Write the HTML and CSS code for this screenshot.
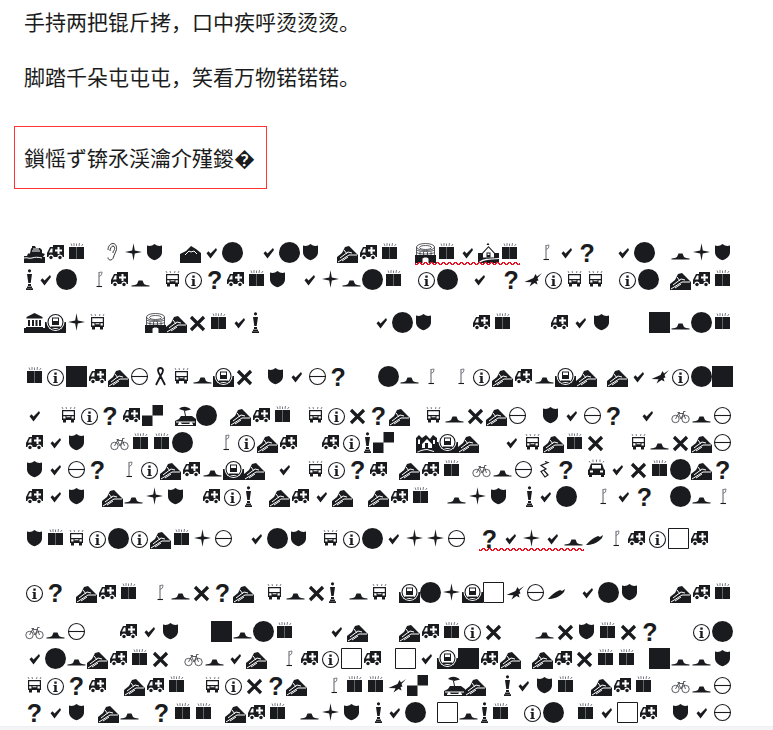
FILE: index.html
```html
<!DOCTYPE html>
<html lang="zh">
<head>
<meta charset="utf-8">
<title>锟斤拷</title>
<link rel="stylesheet" href="styles.css">
</head>
<body>
<svg class="defs" width="0" height="0">
<symbol id="a" viewBox="0 0 21 21"><path fill-rule="evenodd" d="M8 3h11v12h-1.400a2.600 2.600 0 0 0-5.200 0H8.600a2.600 2.600 0 0 0-5.200 0H2v-4l3-6h3zM4 10.500h3.500v-4H6zM12.500 5v2.500H10v2h2.500V12h2V9.500H17v-2h-2.500V5z"/><circle cx="6" cy="15.500" r="1.700"/><circle cx="15" cy="15.500" r="1.700"/></symbol>
<symbol id="g" viewBox="0 0 21 21"><path d="M3 5h15v12H3z"/><path class="lt" d="M6 4L5 1.500M8 4V1M10.500 4V1.500M13 4l.5-3M15.500 4L17 2"/><path class="stripe" d="M10.500 5v12"/></symbol>
<symbol id="h" viewBox="0 0 21 21"><path d="M3 3.500c2.700.8 5.200.4 7.500-1.500 2.300 1.900 4.800 2.300 7.500 1.500v7c0 3.700-3.300 6.300-7.500 7.800-4.200-1.500-7.500-4.100-7.500-7.800z"/></symbol>
<symbol id="e" viewBox="0 0 21 21"><path class="ln" d="M6 8c0-4 2.500-6.500 5-6.500s4 3 3.500 6c-.4 2.500-2 4-2.500 6-.4 2-1.500 4.500-3.500 4.500-1.500 0-2.500-1-2.500-2.500M8 9c0-2.500 1.500-5 3-5s2 2 1.500 3.500-1.500 1-1.500 3.500"/></symbol>
<symbol id="p" viewBox="0 0 21 21"><path d="M10.500 1.300l1.300 7.300L19 10l-7.200 1.400-1.300 7.300-1.300-7.300L2 10l7.200-1.400z"/></symbol>
<symbol id="m" viewBox="0 0 21 21"><path d="M0 21v-9l6-3 5-5 5 3 5 4v10z"/><path class="wl" d="M5 13l4-4 2 1 3-1 3 3"/></symbol>
<symbol id="c" viewBox="0 0 21 21"><path d="M5.500 11.300l2-2 2 2.200L15 6l1 2-6.500 8.500z"/></symbol>
<symbol id="o" viewBox="0 0 21 21"><circle cx="10.500" cy="10.500" r="10.500"/></symbol>
<symbol id="K" viewBox="0 0 21 21"><path d="M0 0h21v21H0z"/></symbol>
<symbol id="Y" viewBox="0 0 21 21"><path class="bx" d="M.5.5h20v20H.5z"/></symbol>
<symbol id="t" viewBox="0 0 21 21"><path d="M0 21v-6l5-4 3-6 4-1 4 4 5 5v8z"/><path class="wl" d="M1 20l11-7 8 0M3 16l8-6 4 1M7 8l3 4M5 19l6-4"/></symbol>
<symbol id="f" viewBox="0 0 21 21"><path d="M1.500 17.500h18v-1c-2.500-.2-4.500-.8-5.500-1.500l-1.500-3.500H8.500L7 15c-1 .7-3 1.300-5.500 1.500z"/></symbol>
<symbol id="i" viewBox="0 0 21 21"><circle class="ln1" cx="10.500" cy="11.500" r="8"/><path d="M9.300 6.500h2.400v2.300H9.300zM8.500 10h3.200v6h1v1H8.300v-1h1v-5h-.8z"/></symbol>
<symbol id="u" viewBox="0 0 21 21"><circle class="ln1" cx="10.500" cy="10.500" r="8"/><path class="ln1" d="M2.500 10.500h16"/></symbol>
<symbol id="r" viewBox="0 0 21 21"><path class="ln2" d="M6 19l4.500-9c1.500-2.500 2.500-4 2.500-5.500S12 2 10.500 2 8 3 8 4.500 9 7.500 10.500 10l4.500 9"/></symbol>
<symbol id="x" viewBox="0 0 21 21"><path class="ln3" d="M4 5l13 13M17 5L4 18"/></symbol>
<symbol id="b" viewBox="0 0 21 21"><path class="lt" d="M5 4L4 2M8.500 4l-.5-2M12.500 4l.5-2M16 4l1-2"/><path fill-rule="evenodd" d="M4 5h13v10h-1v2.500h-3V15H8v2.500H5V15H4zM5.200 6.200V10h10.600V6.200zM5.200 11.200v2.300h2.300v-2.300zM8.500 11.200v1h4v-1zM13.500 11.200v2.300h2.300v-2.300z"/></symbol>
<symbol id="n" viewBox="0 0 11 21"><circle cx="5.500" cy="1.800" r="1.600"/><path d="M3 5h5l-1.300 9H4.300zM4 15h3v2H4zM3 17.500h5V19H3zM2 19.300h7V21H2z"/></symbol>
<symbol id="l" viewBox="0 0 21 21"><path class="thin" d="M11 3v14"/><path class="lt" d="M11 3.500l3-.5-.5 3-2.500 1.500"/><path class="ln1" d="M8.500 17.500h5.500"/></symbol>
<symbol id="P" viewBox="0 0 21 21"><path d="M20 4l-5 3.500-1.500-2.500-2 4-9 4 7 .2-2 4.300 5-3.500 3 1.500-1-3.500 2-.5-1-2.500z"/></symbol>
<symbol id="S" viewBox="0 0 21 21"><path d="M0 21v-8h21v8z"/><ellipse class="thin" cx="10.500" cy="5" rx="9" ry="3.500"/><ellipse class="thin" cx="10.500" cy="5.500" rx="6" ry="2"/><path class="thin" d="M1.500 5v8M19.500 5v8M1.500 8c3 2 15 2 18 0M1.500 10.500c3 2 15 2 18 0M5 9.500V13M8.500 10v3M12.500 10v3M16 9.500V13"/><path class="wf" d="M7.500 21v-4c0-2 6-2 6 0v4z"/></symbol>
<symbol id="H" viewBox="0 0 21 21"><path d="M0 21V11h4l6.500-7 6.500 7h4v10z"/><path class="wf" d="M5 11.500l5.500-6 5.500 6v4H5zM1 20c3-3 8-3.500 13-3.500l7-.5v1l-7 .5c-4 0-8 1-11 2.500z"/><path d="M8.500 10.500h4v5h-4zM10 .8l1.500 2.200h-3z"/><path class="wf" d="M9.500 11.500h2V13h-2z"/></symbol>
<symbol id="W" viewBox="0 0 21 21"><path d="M0 21V6l3-3 3 3 4-3 4 4 3-4 4 3v15z"/><path class="wf" d="M2 12V8l1-1 1 1v4zM6 12l5-5 5 5v4H6zM17 8h2v4h-2zM1 20c3-2 7-3 10-3l7 2v1l-7-2c-3 0-7 1-9 2.500z"/><path d="M9 11h3v5H9z"/></symbol>
<symbol id="M" viewBox="0 0 21 21"><path d="M0 10h21v11H0z"/><circle class="wf" cx="10.500" cy="10" r="9"/><circle class="ln1" cx="10.500" cy="10" r="7.500"/><path fill-rule="evenodd" d="M7 5.500h7V13H7zM8 6.500V9h5V6.500zM6 14.500h9V16H6z"/></symbol>
<symbol id="T" viewBox="0 0 21 21"><path d="M0 21v-5h2v-1h17v1h2v5zM2.500 5L10.500 1l8 4v1.500h-16zM4 8h2v6H4zM8 8h2v6H8zM11.500 8h2v6h-2zM15 8h2v6h-2z"/></symbol>
<symbol id="B" viewBox="0 0 21 21"><circle class="thin" cx="5.500" cy="14" r="3.700"/><circle class="thin" cx="15.500" cy="14" r="3.700"/><path class="thin" d="M5.500 14l3-5.500h5L15.500 14M8.500 8.500l2.500 5.500 2.500-6M7.500 7.500h2.500M13.500 8V6.500h2"/></symbol>
<symbol id="U" viewBox="0 0 21 21"><path d="M4 4c3-3 8-3 12 .5L10 6zM10 6l1 5h-1l-1-5zM0 21v-5l4-2 2-3h11l4 3v7z"/><path class="wl" d="M1 17h19M3 19.500h15"/><circle class="wf" cx="5" cy="18.500" r="1.500"/><circle class="wf" cx="16" cy="18.500" r="1.500"/></symbol>
<symbol id="C" viewBox="0 0 21 21"><path d="M0 10.500h10.500V21H0zM10.500 0H21v10.500H10.500z"/></symbol>
<symbol id="Z" viewBox="0 0 21 21"><path d="M2 17c2-2 6-7 12-9l2 1 3-2-1 3-2 2c-3 3-9 5-14 5z"/></symbol>
<symbol id="Q" viewBox="0 0 21 21"><path class="lt" d="M4 3.500L3 2M7 3V.5M10.500 3V.5M14 3V.5M17 3.500L18 2"/><path fill-rule="evenodd" d="M5 4.500h11l2 5.500 1 1v5h-1v2h-3v-2H6v2H3v-2H2v-5l1-1zM6 6v3.500h9V6zM4 11.500v2h3v-2zm10 0v2h3v-2z"/></symbol>
<symbol id="y" viewBox="0 0 21 21"><path class="ln2t" d="M11 2.500l3 1-7 3 5 3.500-5 2.500 4 5.500 3-2-4-4.500"/></symbol>
<symbol id="s" viewBox="0 0 21 21"><path d="M0 21v-7h3l1-2.500h2l1-5 1-.5V4h3l1 2h4l2 2v3l3 1-2 3h2v6z"/><path class="wl" d="M0 16c3-1 5 1 8 0s6-1 10 0M9 7h6M8 9h8"/></symbol>
</svg>
<main class="page">
<p class="para first">手持两把锟斤拷，口中疾呼烫烫烫。</p>
<p class="para">脚踏千朵屯屯屯，笑看万物锘锘锘。</p>
<div class="box">鎻愮ず锛氶渓瀹介殣鍐�</div>
<section class="glyphs">
<div class="r"><svg class="g"><use href="#s"/></svg><svg class="g"><use href="#a"/></svg><svg class="g"><use href="#g"/></svg><i class="s"></i><svg class="g"><use href="#e"/></svg><svg class="g"><use href="#p"/></svg><svg class="g"><use href="#h"/></svg><i class="s"></i><svg class="g"><use href="#m"/></svg><svg class="g"><use href="#c"/></svg><svg class="g"><use href="#o"/></svg><i class="s"></i><svg class="g"><use href="#c"/></svg><svg class="g"><use href="#o"/></svg><svg class="g"><use href="#h"/></svg><i class="s"></i><svg class="g"><use href="#t"/></svg><svg class="g"><use href="#a"/></svg><svg class="g"><use href="#g"/></svg><i class="s"></i><span class="typo"><svg class="g"><use href="#S"/></svg><svg class="g"><use href="#g"/></svg><svg class="g"><use href="#c"/></svg><svg class="g"><use href="#H"/></svg><svg class="g"><use href="#g"/></svg></span><i class="s"></i><svg class="g"><use href="#l"/></svg><svg class="g"><use href="#c"/></svg><b class="q">?</b><i class="s"></i><svg class="g"><use href="#c"/></svg><svg class="g"><use href="#o"/></svg><i class="s"></i><svg class="g"><use href="#f"/></svg><svg class="g"><use href="#p"/></svg><svg class="g"><use href="#h"/></svg></div>
<div class="r"><svg class="g n"><use href="#n"/></svg><svg class="g"><use href="#c"/></svg><svg class="g"><use href="#o"/></svg><i class="s"></i><svg class="g"><use href="#l"/></svg><svg class="g"><use href="#a"/></svg><svg class="g"><use href="#f"/></svg><i class="s"></i><svg class="g"><use href="#b"/></svg><svg class="g"><use href="#i"/></svg><b class="q">?</b><svg class="g"><use href="#a"/></svg><svg class="g"><use href="#g"/></svg><svg class="g"><use href="#h"/></svg><i class="s"></i><svg class="g"><use href="#c"/></svg><svg class="g"><use href="#p"/></svg><svg class="g"><use href="#f"/></svg><svg class="g"><use href="#o"/></svg><svg class="g"><use href="#g"/></svg><i class="s"></i><svg class="g"><use href="#i"/></svg><svg class="g"><use href="#o"/></svg><i class="s"></i><svg class="g"><use href="#c"/></svg><i class="s"></i><b class="q">?</b><svg class="g"><use href="#P"/></svg><svg class="g"><use href="#i"/></svg><svg class="g"><use href="#b"/></svg><svg class="g"><use href="#b"/></svg><i class="s"></i><svg class="g"><use href="#i"/></svg><svg class="g"><use href="#o"/></svg><i class="s"></i><svg class="g"><use href="#t"/></svg><svg class="g"><use href="#a"/></svg><svg class="g"><use href="#g"/></svg></div>
<div class="r gap-43"><svg class="g"><use href="#T"/></svg><svg class="g"><use href="#M"/></svg><svg class="g"><use href="#p"/></svg><svg class="g"><use href="#b"/></svg><i class="s"></i><svg class="g"><use href="#S"/></svg><svg class="g"><use href="#t"/></svg><svg class="g"><use href="#x"/></svg><svg class="g"><use href="#g"/></svg><svg class="g"><use href="#c"/></svg><svg class="g n"><use href="#n"/></svg><i class="s"></i><i class="s"></i><i class="s"></i><svg class="g"><use href="#c"/></svg><svg class="g"><use href="#o"/></svg><svg class="g"><use href="#h"/></svg><i class="s"></i><svg class="g"><use href="#a"/></svg><svg class="g"><use href="#g"/></svg><i class="s"></i><svg class="g"><use href="#a"/></svg><svg class="g"><use href="#c"/></svg><svg class="g"><use href="#h"/></svg><i class="s"></i><svg class="g"><use href="#K"/></svg><svg class="g"><use href="#f"/></svg><svg class="g"><use href="#o"/></svg><svg class="g"><use href="#g"/></svg></div>
<div class="r gap-54"><svg class="g"><use href="#g"/></svg><svg class="g"><use href="#i"/></svg><svg class="g"><use href="#K"/></svg><svg class="g"><use href="#a"/></svg><svg class="g"><use href="#t"/></svg><svg class="g"><use href="#u"/></svg><svg class="g"><use href="#r"/></svg><svg class="g"><use href="#b"/></svg><svg class="g"><use href="#f"/></svg><svg class="g"><use href="#M"/></svg><svg class="g"><use href="#x"/></svg><i class="s"></i><svg class="g"><use href="#h"/></svg><svg class="g"><use href="#c"/></svg><svg class="g"><use href="#u"/></svg><b class="q">?</b><i class="s"></i><i class="s"></i><i class="s"></i><svg class="g"><use href="#o"/></svg><svg class="g"><use href="#f"/></svg><svg class="g"><use href="#l"/></svg><i class="s"></i><svg class="g"><use href="#l"/></svg><svg class="g"><use href="#i"/></svg><svg class="g"><use href="#t"/></svg><svg class="g"><use href="#a"/></svg><svg class="g"><use href="#f"/></svg><svg class="g"><use href="#M"/></svg><svg class="g"><use href="#t"/></svg><i class="s"></i><svg class="g"><use href="#t"/></svg><svg class="g"><use href="#c"/></svg><svg class="g"><use href="#P"/></svg><svg class="g"><use href="#i"/></svg><svg class="g"><use href="#o"/></svg><svg class="g"><use href="#K"/></svg></div>
<div class="r gap-39"><svg class="g"><use href="#c"/></svg><i class="s"></i><svg class="g"><use href="#b"/></svg><svg class="g"><use href="#i"/></svg><b class="q">?</b><svg class="g"><use href="#a"/></svg><svg class="g"><use href="#C"/></svg><i class="s"></i><svg class="g"><use href="#U"/></svg><svg class="g"><use href="#o"/></svg><i class="s"></i><svg class="g"><use href="#t"/></svg><svg class="g"><use href="#a"/></svg><svg class="g"><use href="#g"/></svg><i class="s"></i><svg class="g"><use href="#b"/></svg><svg class="g"><use href="#i"/></svg><svg class="g"><use href="#x"/></svg><b class="q">?</b><svg class="g"><use href="#t"/></svg><i class="s"></i><svg class="g"><use href="#b"/></svg><svg class="g"><use href="#f"/></svg><svg class="g"><use href="#x"/></svg><svg class="g"><use href="#t"/></svg><svg class="g"><use href="#u"/></svg><i class="s"></i><svg class="g"><use href="#h"/></svg><svg class="g"><use href="#c"/></svg><svg class="g"><use href="#u"/></svg><b class="q">?</b><i class="s"></i><svg class="g"><use href="#c"/></svg><i class="s"></i><svg class="g"><use href="#B"/></svg><svg class="g"><use href="#f"/></svg><svg class="g"><use href="#u"/></svg></div>
<div class="r"><svg class="g"><use href="#a"/></svg><svg class="g"><use href="#c"/></svg><svg class="g"><use href="#h"/></svg><i class="s"></i><svg class="g"><use href="#B"/></svg><svg class="g"><use href="#g"/></svg><svg class="g"><use href="#g"/></svg><svg class="g"><use href="#o"/></svg><i class="s"></i><svg class="g"><use href="#l"/></svg><svg class="g"><use href="#i"/></svg><svg class="g"><use href="#t"/></svg><svg class="g"><use href="#a"/></svg><i class="s"></i><svg class="g"><use href="#a"/></svg><svg class="g"><use href="#i"/></svg><svg class="g n"><use href="#n"/></svg><svg class="g"><use href="#C"/></svg><i class="s"></i><svg class="g"><use href="#W"/></svg><svg class="g"><use href="#M"/></svg><svg class="g"><use href="#t"/></svg><i class="s"></i><svg class="g"><use href="#c"/></svg><svg class="g"><use href="#b"/></svg><svg class="g"><use href="#t"/></svg><svg class="g"><use href="#g"/></svg><svg class="g"><use href="#x"/></svg><i class="s"></i><svg class="g"><use href="#b"/></svg><svg class="g"><use href="#f"/></svg><svg class="g"><use href="#x"/></svg><svg class="g"><use href="#t"/></svg><svg class="g"><use href="#u"/></svg></div>
<div class="r"><svg class="g"><use href="#h"/></svg><svg class="g"><use href="#c"/></svg><svg class="g"><use href="#u"/></svg><b class="q">?</b><i class="s"></i><svg class="g"><use href="#l"/></svg><svg class="g"><use href="#i"/></svg><svg class="g"><use href="#t"/></svg><svg class="g"><use href="#a"/></svg><svg class="g"><use href="#f"/></svg><svg class="g"><use href="#M"/></svg><svg class="g"><use href="#t"/></svg><i class="s"></i><svg class="g"><use href="#c"/></svg><i class="s"></i><svg class="g"><use href="#b"/></svg><svg class="g"><use href="#i"/></svg><b class="q">?</b><svg class="g"><use href="#a"/></svg><i class="s"></i><svg class="g"><use href="#t"/></svg><svg class="g"><use href="#a"/></svg><svg class="g"><use href="#g"/></svg><i class="s"></i><svg class="g"><use href="#B"/></svg><svg class="g"><use href="#f"/></svg><svg class="g"><use href="#u"/></svg><svg class="g"><use href="#y"/></svg><b class="q">?</b><i class="s"></i><svg class="g"><use href="#Q"/></svg><svg class="g"><use href="#c"/></svg><svg class="g"><use href="#x"/></svg><svg class="g"><use href="#g"/></svg><svg class="g"><use href="#o"/></svg><svg class="g"><use href="#t"/></svg><b class="q">?</b></div>
<div class="r"><svg class="g"><use href="#a"/></svg><svg class="g"><use href="#c"/></svg><svg class="g"><use href="#h"/></svg><i class="s"></i><svg class="g"><use href="#t"/></svg><svg class="g"><use href="#f"/></svg><svg class="g"><use href="#p"/></svg><svg class="g"><use href="#h"/></svg><i class="s"></i><svg class="g"><use href="#a"/></svg><svg class="g"><use href="#i"/></svg><svg class="g n"><use href="#n"/></svg><i class="s"></i><svg class="g"><use href="#t"/></svg><svg class="g"><use href="#a"/></svg><svg class="g"><use href="#c"/></svg><svg class="g"><use href="#t"/></svg><i class="s"></i><svg class="g"><use href="#t"/></svg><svg class="g"><use href="#a"/></svg><svg class="g"><use href="#g"/></svg><i class="s"></i><svg class="g"><use href="#f"/></svg><svg class="g"><use href="#p"/></svg><svg class="g"><use href="#h"/></svg><i class="s"></i><svg class="g n"><use href="#n"/></svg><svg class="g"><use href="#c"/></svg><svg class="g"><use href="#o"/></svg><i class="s"></i><svg class="g"><use href="#l"/></svg><svg class="g"><use href="#c"/></svg><b class="q">?</b><i class="s"></i><svg class="g"><use href="#o"/></svg><svg class="g"><use href="#f"/></svg><svg class="g"><use href="#l"/></svg></div>
<div class="r gap-42"><svg class="g"><use href="#h"/></svg><svg class="g"><use href="#g"/></svg><svg class="g"><use href="#b"/></svg><svg class="g"><use href="#i"/></svg><svg class="g"><use href="#o"/></svg><svg class="g"><use href="#i"/></svg><svg class="g"><use href="#t"/></svg><svg class="g"><use href="#g"/></svg><svg class="g"><use href="#p"/></svg><svg class="g"><use href="#u"/></svg><i class="s"></i><svg class="g"><use href="#c"/></svg><svg class="g"><use href="#o"/></svg><svg class="g"><use href="#h"/></svg><i class="s"></i><svg class="g"><use href="#b"/></svg><svg class="g"><use href="#i"/></svg><svg class="g"><use href="#o"/></svg><svg class="g"><use href="#c"/></svg><svg class="g"><use href="#p"/></svg><svg class="g"><use href="#p"/></svg><svg class="g"><use href="#u"/></svg><i class="s"></i><span class="typo"><b class="q">?</b><svg class="g"><use href="#c"/></svg><svg class="g"><use href="#p"/></svg><svg class="g"><use href="#c"/></svg><svg class="g"><use href="#f"/></svg></span><svg class="g"><use href="#Z"/></svg><svg class="g"><use href="#l"/></svg><svg class="g"><use href="#a"/></svg><svg class="g"><use href="#i"/></svg><svg class="g"><use href="#Y"/></svg><svg class="g"><use href="#a"/></svg><i class="s"></i><i class="s"></i></div>
<div class="r gap-54"><svg class="g"><use href="#i"/></svg><b class="q">?</b><i class="s"></i><svg class="g"><use href="#t"/></svg><svg class="g"><use href="#a"/></svg><svg class="g"><use href="#g"/></svg><i class="s"></i><svg class="g"><use href="#l"/></svg><svg class="g"><use href="#f"/></svg><svg class="g"><use href="#x"/></svg><b class="q">?</b><svg class="g"><use href="#t"/></svg><i class="s"></i><svg class="g"><use href="#b"/></svg><svg class="g"><use href="#f"/></svg><svg class="g"><use href="#x"/></svg><svg class="g n"><use href="#n"/></svg><i class="s"></i><svg class="g"><use href="#f"/></svg><svg class="g"><use href="#b"/></svg><i class="s"></i><svg class="g"><use href="#M"/></svg><svg class="g"><use href="#o"/></svg><svg class="g"><use href="#p"/></svg><svg class="g"><use href="#M"/></svg><svg class="g"><use href="#Y"/></svg><svg class="g"><use href="#P"/></svg><svg class="g"><use href="#u"/></svg><svg class="g"><use href="#Z"/></svg><i class="s"></i><svg class="g"><use href="#c"/></svg><svg class="g"><use href="#o"/></svg><svg class="g"><use href="#h"/></svg><i class="s"></i><i class="s"></i><i class="s"></i><svg class="g"><use href="#t"/></svg><svg class="g"><use href="#a"/></svg><svg class="g"><use href="#g"/></svg></div>
<div class="r gap-39"><svg class="g"><use href="#B"/></svg><svg class="g"><use href="#f"/></svg><svg class="g"><use href="#u"/></svg><i class="s"></i><i class="s"></i><i class="s"></i><svg class="g"><use href="#a"/></svg><svg class="g"><use href="#c"/></svg><svg class="g"><use href="#h"/></svg><i class="s"></i><i class="s"></i><i class="s"></i><svg class="g"><use href="#K"/></svg><svg class="g"><use href="#f"/></svg><svg class="g"><use href="#o"/></svg><svg class="g"><use href="#g"/></svg><i class="s"></i><i class="s"></i><i class="s"></i><svg class="g"><use href="#c"/></svg><svg class="g"><use href="#t"/></svg><i class="s"></i><i class="s"></i><i class="s"></i><svg class="g"><use href="#t"/></svg><svg class="g"><use href="#a"/></svg><svg class="g"><use href="#g"/></svg><svg class="g"><use href="#i"/></svg><svg class="g"><use href="#x"/></svg><i class="s"></i><i class="s"></i><i class="s"></i><svg class="g"><use href="#f"/></svg><svg class="g"><use href="#x"/></svg><svg class="g"><use href="#h"/></svg><svg class="g"><use href="#g"/></svg><svg class="g"><use href="#x"/></svg><b class="q">?</b><i class="s"></i><i class="s"></i><i class="s"></i><svg class="g"><use href="#i"/></svg><svg class="g"><use href="#o"/></svg></div>
<div class="r"><svg class="g"><use href="#c"/></svg><svg class="g"><use href="#o"/></svg><svg class="g"><use href="#f"/></svg><svg class="g"><use href="#t"/></svg><svg class="g"><use href="#a"/></svg><svg class="g"><use href="#g"/></svg><svg class="g"><use href="#x"/></svg><i class="s"></i><svg class="g"><use href="#B"/></svg><svg class="g"><use href="#f"/></svg><svg class="g"><use href="#c"/></svg><svg class="g"><use href="#t"/></svg><i class="s"></i><svg class="g"><use href="#l"/></svg><svg class="g"><use href="#a"/></svg><svg class="g"><use href="#i"/></svg><svg class="g"><use href="#Y"/></svg><svg class="g"><use href="#a"/></svg><i class="s"></i><svg class="g"><use href="#Y"/></svg><svg class="g"><use href="#c"/></svg><svg class="g"><use href="#M"/></svg><svg class="g"><use href="#K"/></svg><svg class="g"><use href="#a"/></svg><svg class="g"><use href="#t"/></svg><i class="s"></i><svg class="g"><use href="#t"/></svg><svg class="g"><use href="#a"/></svg><svg class="g"><use href="#x"/></svg><svg class="g"><use href="#g"/></svg><svg class="g"><use href="#g"/></svg><i class="s"></i><svg class="g"><use href="#K"/></svg><svg class="g"><use href="#f"/></svg><svg class="g"><use href="#f"/></svg><svg class="g"><use href="#h"/></svg></div>
<div class="r"><svg class="g"><use href="#b"/></svg><svg class="g"><use href="#i"/></svg><b class="q">?</b><svg class="g"><use href="#a"/></svg><i class="s"></i><svg class="g"><use href="#t"/></svg><svg class="g"><use href="#a"/></svg><svg class="g"><use href="#g"/></svg><i class="s"></i><svg class="g"><use href="#b"/></svg><svg class="g"><use href="#i"/></svg><svg class="g"><use href="#x"/></svg><b class="q">?</b><svg class="g"><use href="#t"/></svg><i class="s"></i><svg class="g"><use href="#l"/></svg><svg class="g"><use href="#g"/></svg><svg class="g"><use href="#g"/></svg><svg class="g"><use href="#P"/></svg><svg class="g"><use href="#C"/></svg><i class="s"></i><svg class="g"><use href="#U"/></svg><svg class="g"><use href="#t"/></svg><i class="s"></i><svg class="g n"><use href="#n"/></svg><svg class="g"><use href="#c"/></svg><svg class="g"><use href="#h"/></svg><svg class="g"><use href="#g"/></svg><i class="s"></i><svg class="g"><use href="#t"/></svg><svg class="g"><use href="#a"/></svg><svg class="g"><use href="#g"/></svg><i class="s"></i><svg class="g"><use href="#B"/></svg><svg class="g"><use href="#f"/></svg><svg class="g"><use href="#u"/></svg></div>
<div class="r"><b class="q">?</b><svg class="g"><use href="#c"/></svg><svg class="g"><use href="#h"/></svg><i class="s"></i><svg class="g"><use href="#t"/></svg><svg class="g"><use href="#f"/></svg><i class="s"></i><b class="q">?</b><svg class="g"><use href="#g"/></svg><svg class="g"><use href="#g"/></svg><i class="s"></i><svg class="g"><use href="#t"/></svg><svg class="g"><use href="#a"/></svg><svg class="g"><use href="#g"/></svg><i class="s"></i><svg class="g"><use href="#f"/></svg><svg class="g"><use href="#p"/></svg><svg class="g"><use href="#h"/></svg><i class="s"></i><svg class="g n"><use href="#n"/></svg><svg class="g"><use href="#c"/></svg><svg class="g"><use href="#o"/></svg><i class="s"></i><svg class="g"><use href="#Y"/></svg><svg class="g"><use href="#f"/></svg><svg class="g n"><use href="#n"/></svg><svg class="g"><use href="#g"/></svg><i class="s"></i><svg class="g"><use href="#i"/></svg><svg class="g"><use href="#o"/></svg><i class="s"></i><svg class="g"><use href="#g"/></svg><svg class="g"><use href="#c"/></svg><svg class="g"><use href="#Y"/></svg><svg class="g"><use href="#a"/></svg><i class="s"></i><svg class="g"><use href="#h"/></svg><svg class="g"><use href="#c"/></svg><svg class="g"><use href="#u"/></svg></div>
</section>
</main>
<div class="bar"></div>
</body>
</html>
```
FILE: styles.css
```css
* { box-sizing: border-box; }
html, body { margin: 0; padding: 0; background: #fff; }
body { color: #1b1c20; font-family: "Noto Sans CJK SC", "Liberation Sans", sans-serif; font-size: 21px; overflow: hidden; }
.defs { position: absolute; }
.page { height: 726px; overflow: hidden; padding: 6px 0 0 14px; }
.para { margin: 0 0 25px; padding-left: 10px; line-height: 30px; height: 30px; }
.box { width: 253px; height: 63px; margin-top: 35px; padding-left: 9px; line-height: 61px; border: 1px solid #f33; white-space: nowrap; overflow: hidden; }
.glyphs { margin: 53px 0 0 10px; width: 709px; }
.r { display: flex; height: 21px; margin-top: 6px; }
.r:first-child { margin-top: 0; }
.gap-43 { margin-top: 22px; }
.gap-54 { margin-top: 33px; }
.gap-39 { margin-top: 18px; }
.gap-42 { margin-top: 21px; }
.g { flex: none; width: 21px; height: 21px; fill: #1a1b1f; }
.n { width: 11px; }
.s { flex: 1 1 0; }
.q { flex: none; width: 21px; height: 21px; text-align: center; font: bold 25px/23px "Liberation Sans", sans-serif; }
.typo { flex: none; display: flex; position: relative; }
.typo::after { content: ""; position: absolute; left: 0; right: 0; top: 20px; height: 3px; background: linear-gradient(135deg, transparent 35%, #e81123 35%, #e81123 65%, transparent 65%) 0 0 / 3px 3px, linear-gradient(45deg, transparent 35%, #e81123 35%, #e81123 65%, transparent 65%) 3px 0 / 3px 3px; background-size: 6px 3px; background-repeat: repeat-x; }
.lt { fill: none; stroke: #7b7e88; stroke-width: 1; }
.stripe { fill: none; stroke: #8f9c8f; stroke-width: .6; }
.ln { fill: none; stroke: #1a1b1f; stroke-width: .9; }
.ln1 { fill: none; stroke: #1a1b1f; stroke-width: 1.1; }
.ln2 { fill: none; stroke: #1a1b1f; stroke-width: 1.8; }
.ln2t { fill: none; stroke: #1a1b1f; stroke-width: 1.2; }
.ln3 { fill: none; stroke: #1a1b1f; stroke-width: 3.2; }
.thin { fill: none; stroke: #33353c; stroke-width: .8; }
.bx { fill: #fff; stroke: #1a1b1f; stroke-width: 1; }
.wl { fill: none; stroke: #fff; stroke-width: 1; }
.wf { fill: #fff; stroke: none; }
.bar { height: 4px; background: #f3f4f6; border-top: 1px solid #eef0f3; }
```
